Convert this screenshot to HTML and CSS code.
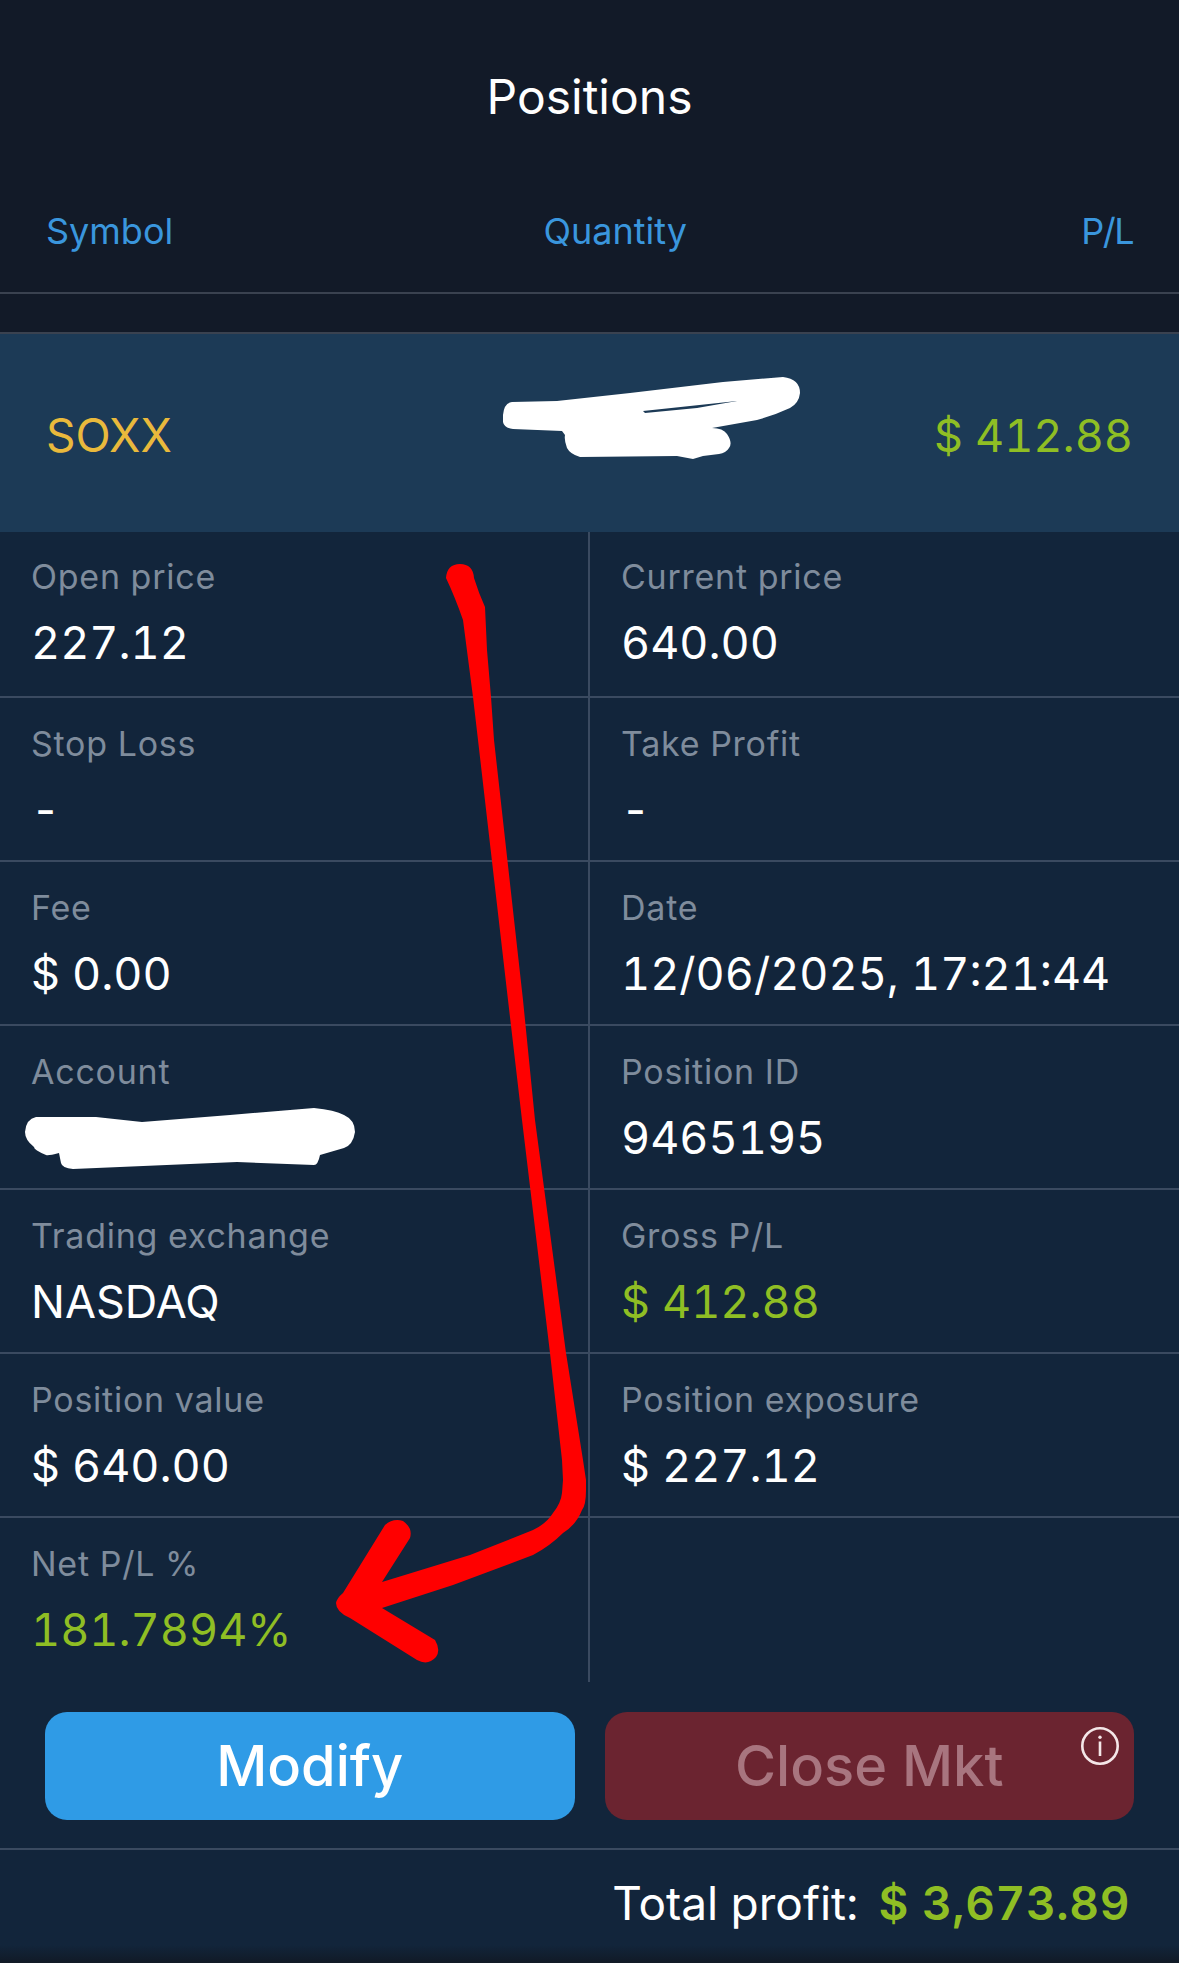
FILE: index.html
```html
<!DOCTYPE html>
<html>
<head>
  <title>Positions</title>
  <link rel="stylesheet" href="styles.css">
</head>
<body>
  <div class="page">
    <h1 class="title">Positions</h1>

    <div class="columns">
      <span>Symbol</span>
      <span class="columns-mid">Quantity</span>
      <span class="columns-pl">P/L</span>
    </div>

    <div class="position-row">
      <span class="symbol">SOXX</span>
      <span class="row-pl">$ 412.88</span>
    </div>

    <div class="details">
      <div class="cell">
        <div class="label">Open price</div>
        <div class="value">227.12</div>
      </div>
      <div class="cell">
        <div class="label">Current price</div>
        <div class="value">640.00</div>
      </div>
      <div class="cell">
        <div class="label">Stop Loss</div>
        <div class="value">-</div>
      </div>
      <div class="cell">
        <div class="label">Take Profit</div>
        <div class="value">-</div>
      </div>
      <div class="cell">
        <div class="label">Fee</div>
        <div class="value">$ 0.00</div>
      </div>
      <div class="cell">
        <div class="label">Date</div>
        <div class="value">12/06/2025, 17:21:44</div>
      </div>
      <div class="cell">
        <div class="label">Account</div>
        <div class="value">&nbsp;</div>
      </div>
      <div class="cell">
        <div class="label">Position ID</div>
        <div class="value">9465195</div>
      </div>
      <div class="cell">
        <div class="label">Trading exchange</div>
        <div class="value">NASDAQ</div>
      </div>
      <div class="cell">
        <div class="label">Gross P/L</div>
        <div class="value green">$ 412.88</div>
      </div>
      <div class="cell">
        <div class="label">Position value</div>
        <div class="value">$ 640.00</div>
      </div>
      <div class="cell">
        <div class="label">Position exposure</div>
        <div class="value">$ 227.12</div>
      </div>
      <div class="cell cell-last">
        <div class="label">Net P/L %</div>
        <div class="value green">181.7894%</div>
      </div>
      <div class="cell cell-last"></div>
    </div>

    <div class="actions">
      <button class="btn btn-modify">Modify</button>
      <button class="btn btn-close">
        Close Mkt
        <svg class="info-icon" viewBox="0 0 38 38">
          <circle cx="19" cy="19" r="17.7" fill="none" stroke="#f4e6e8" stroke-width="2.6"/>
          <rect x="17.7" y="14.5" width="2.6" height="14.5" fill="#f4e6e8"/>
          <circle cx="19" cy="10.3" r="1.7" fill="#f4e6e8"/>
        </svg>
      </button>
    </div>

    <div class="total">
      <span>Total profit:</span>
      <span class="total-amount">$ 3,673.89</span>
    </div>

    <!-- krabbels en pijl liggen over de pagina heen -->
    <svg class="markup" viewBox="0 0 1179 1963">
      <path fill="#fff" fill-rule="evenodd" d="M503 415 Q504 403 512 402 L557 401 L630 393 L723 382 L783 377 Q800 379 800 393 Q799 403 790 408 Q775 415 757 420 L712 428 Q723 428 727 434 Q733 443 729 448 Q726 453 719 454 L703 456 L693 459 L677 456 L580 457 Q570 454 567 448 Q564 440 565 435 L562 431 L513 429 Q504 428 503 422 Z M643 411 L737 401 L697 408 L645 413 Z"/>
      <path fill="#fff" d="M25 1132 Q26 1119 36 1117 L96 1117 L142 1122 L230 1115 L314 1108 Q335 1110 344 1115 Q355 1120 355 1132 Q353 1145 344 1148 L320 1155 Q318 1165 314 1165 L237 1162 L73 1169 Q62 1168 61 1163 L59 1153 Q48 1156 46 1155 Q34 1150 34 1147 Q25 1140 25 1132 Z"/>
      <path fill="#ff0000" d="M446 578 Q447 564 460 564 Q473 564 474 578 Q479 594 485 607 L487 650 L491 697 L494 740 L523 1000 L535 1120 L566 1353 L583 1460 L586 1480 L586 1490 Q586 1505 582 1510 Q576 1525 563 1533 Q550 1546 533 1555 L453 1585 L382 1608 L435 1640 Q441 1650 436 1657 Q428 1666 417 1660 L350 1618 Q336 1612 336 1603 Q337 1598 343 1593 L385 1525 Q393 1518 403 1521 Q413 1528 410 1538 L382 1582 L470 1555 L533 1530 Q546 1524 553 1513 Q561 1503 562 1493 L563 1480 L562 1460 L550 1353 L522 1120 L508 1000 L478 740 L473 697 L463 620 Q455 597 446 578 Z"/>
    </svg>
  </div>
</body>
</html>
```

FILE: styles.css
```css
* {
  box-sizing: border-box;
}

body {
  margin: 0;
  background-color: #12253b;
  font-family: 'Inter', 'Liberation Sans', sans-serif;
  color: #ffffff;
  font-variant-numeric: tabular-nums;
}

.page {
  position: relative;
  width: 1179px;
  height: 1963px;
  overflow: hidden;
  background: linear-gradient(to bottom, #12253b 1945px, #111a26 1963px);
}

.title {
  margin: 0;
  height: 194px;
  padding-top: 66px;
  background-color: #121a28;
  text-align: center;
  font-size: 48px;
  line-height: 62px;
  font-weight: 400;
}

.columns {
  display: flex;
  justify-content: space-between;
  height: 100px;
  padding: 15px 46px 0;
  background-color: #121a28;
  border-bottom: 2px solid #3a4250;
  color: #3a96dd;
  font-size: 36px;
  line-height: 44px;
}

.columns-mid {
  margin-left: -24px;
}

.columns-pl {
  letter-spacing: -1.5px;
}

.position-row {
  display: flex;
  justify-content: space-between;
  align-items: center;
  height: 238px;
  padding: 44px 46px 0;
  background-color: #121a28;
  background-image: linear-gradient(to bottom, #121a28 38px, #3a4250 38px, #3a4250 40px, #1c3a56 40px);
  font-size: 46px;
}

.symbol {
  color: #e9b93c;
}

.row-pl {
  color: #8fbe24;
  font-size: 45px;
}

.details {
  display: grid;
  grid-template-columns: 590px 589px;
  grid-template-rows: 166px;
  grid-auto-rows: 164px;
}

.cell {
  padding: 24px 0 0 31px;
  border-bottom: 2px solid #3a4a60;
}

.cell:nth-child(-n+2) {
  padding-top: 23px;
}

.cell:nth-child(odd) {
  border-right: 2px solid #3a4a60;
}

.cell-last {
  border-bottom: none;
}

.label {
  color: #7f8c9c;
  font-size: 34px;
  line-height: 44px;
  letter-spacing: 0.75px;
}

.value {
  margin-top: 16px;
  font-size: 45px;
  line-height: 56px;
}

.green {
  color: #8fbe24;
}

.actions {
  display: flex;
  gap: 30px;
  padding: 30px 45px 28px;
  border-bottom: 2px solid #3a4a60;
}

.btn {
  position: relative;
  flex: 1;
  height: 108px;
  border: none;
  border-radius: 22px;
  font-family: inherit;
  font-size: 56px;
  font-weight: 500;
}

.btn-modify {
  background-color: #2f9be6;
  color: #ffffff;
}

.btn-close {
  background-color: #6b2430;
  color: #a8757f;
}

.info-icon {
  position: absolute;
  top: 15px;
  right: 15px;
  width: 38px;
  height: 38px;
}

.total {
  display: flex;
  justify-content: flex-end;
  gap: 20px;
  padding: 24px 49px 0 0;
  font-size: 46px;
  line-height: 58px;
}

.total-amount {
  color: #8fbe24;
  font-weight: 600;
  letter-spacing: 0.6px;
}

.markup {
  position: absolute;
  top: 0;
  left: 0;
  width: 1179px;
  height: 1963px;
}
```
